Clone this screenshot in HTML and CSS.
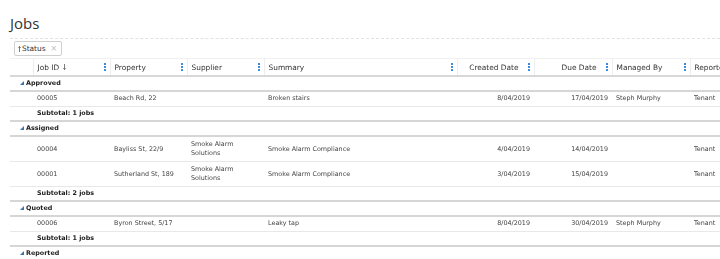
FILE: index.html
```html
<!DOCTYPE html>
<html lang="en">
<head>
    <meta charset="UTF-8">
    <meta name="viewport" content="width=device-width, initial-scale=1.0">
    <title>Jobs</title>
    <link rel="stylesheet" href="styles.css">
</head>
<body>
    <div class="page">
        <h1 class="title">Jobs</h1>
        <div class="group-panel">
            <span class="chip">
                <svg class="arrow" width="3" height="6" viewBox="0 0 3 6"><path d="M1.5 0.5V6M0.3 1.8L1.5 0.5L2.7 1.8" fill="none" stroke="#444" stroke-width="0.7"/></svg>
                Status
                <span class="chip-close">&times;</span>
            </span>
        </div>
        <table class="jobs">
            <colgroup>
                <col class="c-expand">
                <col class="c-std">
                <col class="c-std">
                <col class="c-std">
                <col class="c-wide">
                <col class="c-std">
                <col class="c-date">
                <col class="c-date">
                <col class="c-date">
            </colgroup>
            <thead>
                <tr>
                    <th></th>
                    <th><div class="th-inner"><span>Job ID</span><svg class="arrow sort" width="3" height="6" viewBox="0 0 3 6"><path d="M1.5 0V5.5M0.3 4.2L1.5 5.5L2.7 4.2" fill="none" stroke="#444" stroke-width="0.7"/></svg><span class="kebab"><i></i><i></i><i></i></span></div></th>
                    <th><div class="th-inner"><span>Property</span><span class="kebab"><i></i><i></i><i></i></span></div></th>
                    <th><div class="th-inner"><span>Supplier</span><span class="kebab"><i></i><i></i><i></i></span></div></th>
                    <th><div class="th-inner"><span>Summary</span><span class="kebab"><i></i><i></i><i></i></span></div></th>
                    <th><div class="th-inner right"><span>Created Date</span><span class="kebab"><i></i><i></i><i></i></span></div></th>
                    <th><div class="th-inner right"><span>Due Date</span><span class="kebab"><i></i><i></i><i></i></span></div></th>
                    <th><div class="th-inner"><span>Managed By</span><span class="kebab"><i></i><i></i><i></i></span></div></th>
                    <th><div class="th-inner"><span>Reported By</span><span class="kebab"><i></i><i></i><i></i></span></div></th>
                </tr>
            </thead>
            <tbody>
                <tr class="group"><td colspan="9"><span class="caret"></span>Approved</td></tr>
                <tr class="row">
                    <td></td><td>00005</td><td>Beach Rd, 22</td><td></td><td>Broken stairs</td>
                    <td class="num">8/04/2019</td><td class="num">17/04/2019</td><td>Steph Murphy</td><td>Tenant</td>
                </tr>
                <tr class="subtotal"><td></td><td colspan="8">Subtotal: 1 jobs</td></tr>

                <tr class="group"><td colspan="9"><span class="caret"></span>Assigned</td></tr>
                <tr class="row tall">
                    <td></td><td>00004</td><td>Bayliss St, 22/9</td><td class="wrap">Smoke Alarm Solutions</td><td>Smoke Alarm Compliance</td>
                    <td class="num">4/04/2019</td><td class="num">14/04/2019</td><td></td><td>Tenant</td>
                </tr>
                <tr class="row tall">
                    <td></td><td>00001</td><td>Sutherland St, 189</td><td class="wrap">Smoke Alarm Solutions</td><td>Smoke Alarm Compliance</td>
                    <td class="num">3/04/2019</td><td class="num">15/04/2019</td><td></td><td>Tenant</td>
                </tr>
                <tr class="subtotal"><td></td><td colspan="8">Subtotal: 2 jobs</td></tr>

                <tr class="group"><td colspan="9"><span class="caret"></span>Quoted</td></tr>
                <tr class="row">
                    <td></td><td>00006</td><td>Byron Street, 5/17</td><td></td><td>Leaky tap</td>
                    <td class="num">8/04/2019</td><td class="num">30/04/2019</td><td>Steph Murphy</td><td>Tenant</td>
                </tr>
                <tr class="subtotal"><td></td><td colspan="8">Subtotal: 1 jobs</td></tr>

                <tr class="group"><td colspan="9"><span class="caret"></span>Reported</td></tr>
            </tbody>
        </table>
    </div>
</body>
</html>
```

FILE: styles.css
```css
body {
    margin: 0;
    background-color: #fff;
    font-family: "DejaVu Sans", Verdana, sans-serif;
    color: #333;
    overflow: hidden;
}
.page {
    padding: 0 0 0 10px;
}
.title {
    margin: 0;
    padding-top: 12px;
    margin-bottom: 4px;
    font-family: "Open Sans", sans-serif;
    font-weight: 400;
    font-size: 15px;
    line-height: 22px;
    color: #333;
}
.group-panel {
    border-top: 1px dashed #e2e2e2;
    height: 19px;
    padding-left: 4px;
    display: flex;
    align-items: center;
}
.chip {
    display: inline-flex;
    align-items: center;
    height: 13px;
    padding: 0 4px 0 3px;
    border: 1px solid #cfcfcf;
    border-radius: 2px;
    font-size: 7.4px;
    color: #333;
}
.chip .arrow {
    margin-right: 1px;
}
.chip-close {
    margin-left: 5px;
    color: #bbb;
    font-size: 8px;
}
.jobs {
    table-layout: fixed;
    width: 758px;
    border-collapse: collapse;
    will-change: transform; /* keeps the small text grey, no colour fringes */
}
.c-expand { width: 23px; }
.c-std { width: 77px; }
.c-wide { width: 193px; }
.c-date { width: 78px; }
.jobs th {
    height: 16px;
    padding: 0 3px 0 4px;
    border-top: 1px solid #f0f0f0;
    border-bottom: 2px solid #d8d8d8;
    border-right: 1px solid #eeeeee;
    font-size: 7.4px;
    font-weight: normal;
    text-align: left;
    white-space: nowrap;
    overflow: hidden;
    color: #333;
}
.th-inner {
    display: flex;
    align-items: center;
}
.th-inner .kebab {
    margin-left: auto;
}
.th-inner.right {
    justify-content: flex-end;
}
.th-inner.right .kebab {
    margin-left: 9px;
}
.sort {
    margin-left: 4px;
}
.kebab {
    display: flex;
    flex-direction: column;
    gap: 1px;
    margin-right: 1px;
}
.kebab i {
    display: block;
    width: 2px;
    height: 2px;
    background-color: #3d8ddb;
}
.jobs td {
    padding: 2px 4px 3px;
    font-size: 6.4px;
    line-height: 9px;
    color: #444;
    vertical-align: middle;
    white-space: nowrap;
    overflow: hidden;
}
.jobs td.num {
    text-align: right;
}
.jobs td.wrap {
    white-space: normal;
}
.row td {
    border-bottom: 1px solid #e8e8e8;
}
.row.tall td {
    padding-top: 3px;
}
.group td,
.subtotal td {
    padding: 2px 4px 2px;
    border-bottom: 2px solid #d6d6d6;
    font-weight: bold;
    color: #222;
}
.group td {
    padding-left: 10px;
}
.caret {
    display: inline-block;
    width: 0;
    height: 0;
    border-left: 4px solid transparent;
    border-bottom: 4px solid #3b73ad;
    margin-right: 2px;
    vertical-align: 0;
}
```
